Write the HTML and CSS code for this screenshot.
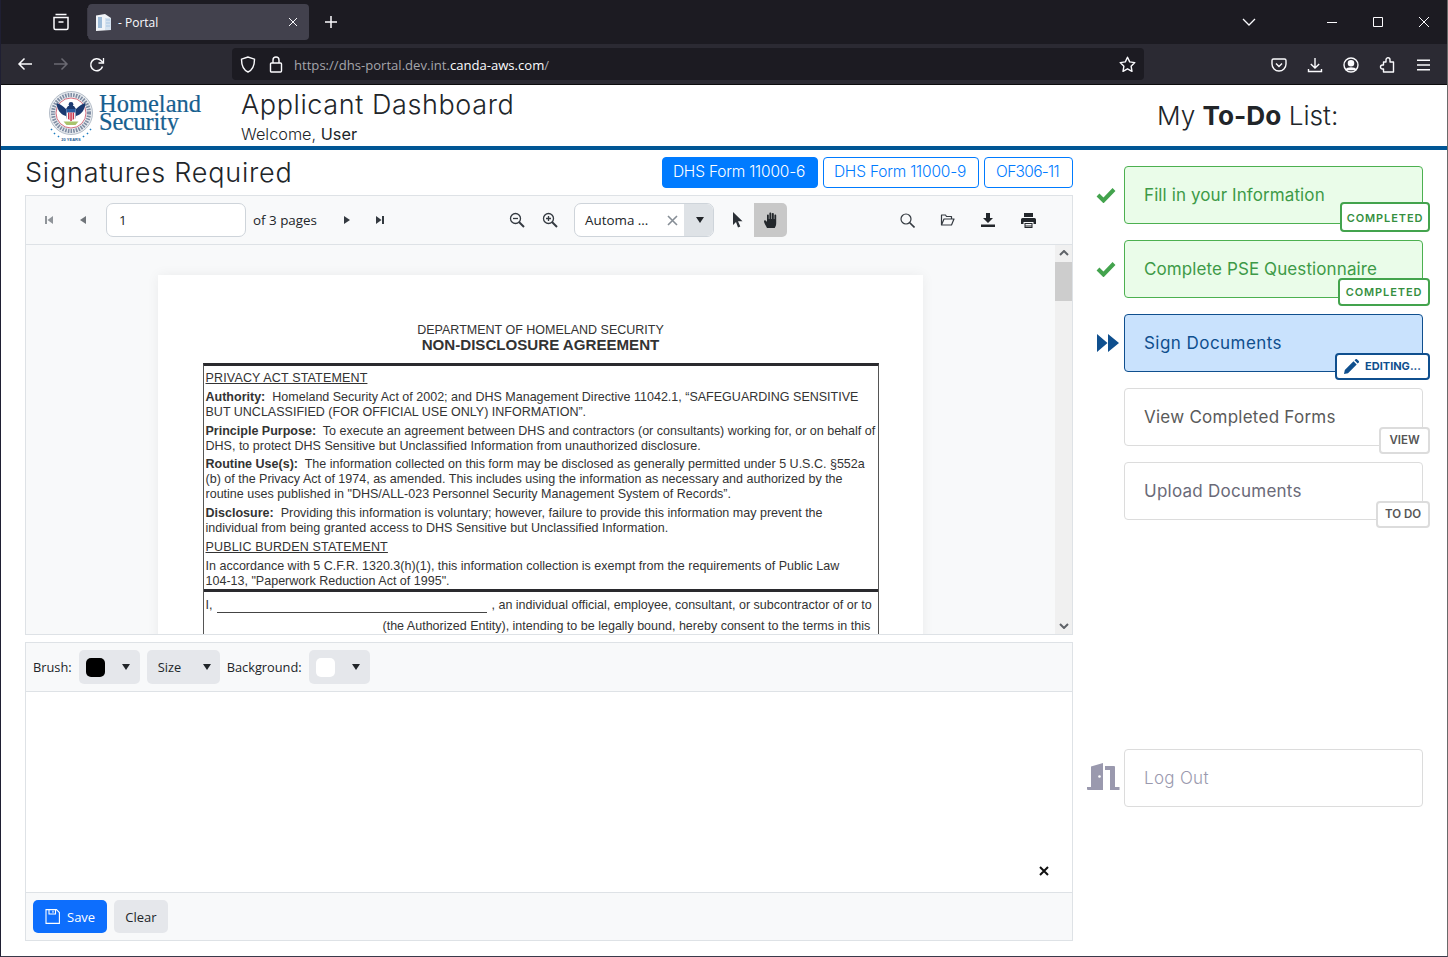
FILE: index.html
```html
<!DOCTYPE html>
<html lang="en">
<head>
  <meta charset="UTF-8">
  <title>Portal</title>
  <link rel="stylesheet" href="styles.css">
</head>
<body>
<div class="tabbar">
  <svg class="fx-view" width="18" height="18" viewBox="0 0 18 18" fill="none" stroke="#fbfbfe" stroke-width="1.5"><path d="M3.5 1.5h11M2 4.500h14v10.500a1.500 1.500 0 0 1-1.500 1.500h-11a1.500 1.500 0 0 1-1.500-1.500zM6.500 9h5"/></svg>
  <div class="tab">
    <svg width="16" height="17" viewBox="0 0 16 17"><path d="M0 1.500 9 0l6 4v12l-15 1z" fill="#f1f4f8"/><path d="M9 4h6v12H9z" fill="#d5e2ef"/><path d="M2 3h4v11H2z" fill="#9dbbd8"/><path d="M10 6h4M10 9h4M10 12h4" stroke="#a9c6e3"/></svg>
    <span class="tab-title">- Portal</span>
    <svg class="tab-x" width="10" height="10" viewBox="0 0 10 10" stroke="#fbfbfe" stroke-width="1"><path d="M1 1l8 8M9 1l-8 8"/></svg>
  </div>
  <svg class="tab-plus" width="14" height="14" viewBox="0 0 14 14" stroke="#fbfbfe" stroke-width="1.500"><path d="M7 1v12M1 7h12"/></svg>
  <svg class="tab-list" width="14" height="8" viewBox="0 0 14 8" fill="none" stroke="#fbfbfe" stroke-width="1.300"><path d="M1 1l6 6 6-6"/></svg>
  <div class="win-btns">
    <svg width="10" height="10" viewBox="0 0 10 10" stroke="#fbfbfe"><path d="M0 5.500h10"/></svg>
    <svg width="10" height="10" viewBox="0 0 10 10" fill="none" stroke="#fbfbfe"><path d="M.5.500h9v9h-9z"/></svg>
    <svg width="10" height="10" viewBox="0 0 10 10" stroke="#fbfbfe"><path d="M0 0l10 10M10 0 0 10"/></svg>
  </div>
</div>
<div class="navbar">
  <div class="nav-btns">
    <svg width="16" height="14" viewBox="0 0 16 14" fill="none" stroke="#fbfbfe" stroke-width="1.500"><path d="M15 7H2M7.500 1.500 2 7l5.500 5.500"/></svg>
    <svg width="16" height="14" viewBox="0 0 16 14" fill="none" stroke="#6b6a73" stroke-width="1.500"><path d="M1 7h13M8.500 1.500 14 7l-5.500 5.500"/></svg>
    <svg width="16" height="16" viewBox="0 0 16 16" fill="none" stroke="#fbfbfe" stroke-width="1.500"><path d="M13.500 9.500A6 6 0 1 1 12 3.500l2 2"/><path d="M14.500 1v5h-5" stroke-width="1.300"/></svg>
  </div>
  <div class="urlbar">
    <svg width="16" height="17" viewBox="0 0 16 17" fill="none" stroke="#fbfbfe" stroke-width="1.400"><path d="M8 1 1.500 3.200c0 6 1.500 10.500 6.500 12.800 5-2.300 6.500-6.800 6.500-12.800z"/></svg>
    <svg class="lock" width="14" height="17" viewBox="0 0 14 17" fill="none" stroke="#fbfbfe" stroke-width="1.400"><path d="M1.500 8a1 1 0 0 1 1-1h9a1 1 0 0 1 1 1v7a1 1 0 0 1-1 1h-9a1 1 0 0 1-1-1zM4 7V4a3 3 0 0 1 6 0v3"/></svg>
    <span class="url">https://dhs-portal.dev.int.<b>canda-aws.com</b>/</span>
    <svg class="star" width="17" height="17" viewBox="0 0 17 17" fill="none" stroke="#fbfbfe" stroke-width="1.400" stroke-linejoin="round"><path d="M8.500 1.200l2.200 4.700 5.100.7-3.700 3.600.9 5.100-4.500-2.500-4.500 2.500.9-5.100L1.200 6.600l5.100-.7z"/></svg>
  </div>
  <div class="nav-tools">
    <svg width="16" height="16" viewBox="0 0 16 16" fill="none" stroke="#fbfbfe" stroke-width="1.400"><path d="M2.500 2h11A1.500 1.500 0 0 1 15 3.500V7A7 7 0 0 1 1 7V3.500A1.500 1.500 0 0 1 2.500 2z"/><path d="M5 6.500l3 3 3-3"/></svg>
    <svg width="16" height="16" viewBox="0 0 16 16" fill="none" stroke="#fbfbfe" stroke-width="1.400"><path d="M8 1v10M3.800 7 8 11l4.200-4M1.500 12v2.500h13V12"/></svg>
    <svg width="16" height="16" viewBox="0 0 16 16" fill="none" stroke="#fbfbfe" stroke-width="1.400"><circle cx="8" cy="8" r="7"/><circle cx="8" cy="6.300" r="2.600" fill="#fbfbfe"/><path d="M3.500 12.500c1-2 8-2 9 0z" fill="#fbfbfe"/></svg>
    <svg width="16" height="16" viewBox="0 0 16 16" fill="none" stroke="#fbfbfe" stroke-width="1.400" stroke-linejoin="round"><path d="M7 5V2.800a2 2 0 0 1 4 0V5h3.500v10H4.500v-3h-1a2 2 0 0 1 0-4h1V5z"/></svg>
    <svg width="16" height="16" viewBox="0 0 16 16" stroke="#fbfbfe" stroke-width="1.500"><path d="M2 3.200h13M2 8h13M2 12.800h13"/></svg>
  </div>
</div>

<header class="app-header">
  <div class="logo">
    <svg width="46" height="50" viewBox="0 0 46 50">
      <circle cx="23" cy="22" r="21.500" fill="#e9ecf0" stroke="#b4bdc8"/>
      <circle cx="23" cy="22" r="18" fill="none" stroke="#7f8da3" stroke-width="4" stroke-dasharray="1.600 1.100"/>
      <circle cx="23" cy="22" r="15" fill="#fff" stroke="#c8344a" stroke-width=".7"/>
      <path d="M8.500 12c3 1 6 2.500 9.500 6l2-3h6l2 3c3.500-3.500 6.500-5 9.500-6-.5 6-3.500 11.500-9.500 13l-1 3h-8l-1-3c-6-1.500-9-7-9.500-13z" fill="#1c3a70"/>
      <circle cx="23" cy="13.500" r="2.400" fill="#1c3a70"/>
      <path d="M18.500 18h9v8c0 2.500-2.500 3.500-4.500 4.500-2-1-4.500-2-4.500-4.500z" fill="#fff"/>
      <path d="M18.500 18h9v3.500h-9z" fill="#2a5ba0"/>
      <path d="M20 21.500h1.500V29l-1.500-1zM22.300 21.500h1.500V30l-1.500.3zM24.600 21.500h1.500V28l-1.500 1z" fill="#c8334a"/>
      <path d="M15.500 30.500h15l-3 3.500h-9z" fill="#a9c46c"/>
      <path d="M6 42l1 1M10 45l1 1M35 45l1 1M39 42l1 1M3 38l1 1M42 38l1 1" stroke="#1c7cc0" stroke-width="1.600"/>
      <text x="23" y="49.500" text-anchor="middle" class="seal-text">20 YEARS</text>
    </svg>
    <div class="logo-words">Homeland<br><span>Security</span></div>
  </div>
  <div class="titles">
    <h1>Applicant Dashboard</h1>
    <p>Welcome, <span>User</span></p>
  </div>
  <div class="todo-title">My <b>To-Do</b> List:</div>
</header>

<main class="main">
  <section class="left">
    <div class="doc-head">
      <h2>Signatures Required</h2>
      <div class="doc-tabs">
        <button class="doc-tab active">DHS Form 11000-6</button>
        <button class="doc-tab">DHS Form 11000-9</button>
        <button class="doc-tab short">OF306-11</button>
      </div>
    </div>

    <div class="viewer">
      <div class="viewer-bar">
        <svg class="ico first" width="10" height="10" viewBox="0 0 10 10" fill="#8f9499"><path d="M1 1h2v8H1zM9 1v8L3.500 5z"/></svg>
        <svg class="ico prev" width="8" height="10" viewBox="0 0 8 10" fill="#70757a"><path d="M7 1v8L1 5z"/></svg>
        <input class="page-input" value="1">
        <span class="of-pages">of 3 pages</span>
        <svg class="ico next" width="8" height="10" viewBox="0 0 8 10" fill="#343a40"><path d="M1 1v8l6-4z"/></svg>
        <svg class="ico last" width="10" height="10" viewBox="0 0 10 10" fill="#343a40"><path d="M9 1H7v8h2zM1 1v8l5.500-4z"/></svg>
        <svg class="ico zoom-out" width="16" height="16" viewBox="0 0 16 16" fill="none" stroke="#343a40" stroke-width="1.300"><circle cx="6.500" cy="6.500" r="5"/><path d="M4 6.500h5"/><path d="M10 10l5 5" stroke-width="2"/></svg>
        <svg class="ico zoom-in" width="16" height="16" viewBox="0 0 16 16" fill="none" stroke="#343a40" stroke-width="1.300"><circle cx="6.500" cy="6.500" r="5"/><path d="M4 6.500h5M6.500 4v5"/><path d="M10 10l5 5" stroke-width="2"/></svg>
        <div class="zoom-combo">
          <span class="combo-text">Automa ...</span>
          <svg class="combo-x" width="11" height="11" viewBox="0 0 11 11" stroke="#868e96" stroke-width="1.600"><path d="M1 1l9 9M10 1l-9 9"/></svg>
          <span class="combo-btn"><i class="caret dark"></i></span>
        </div>
        <svg class="ico pointer" width="11" height="16" viewBox="0 0 11 16" fill="#2b3036"><path d="M1 0v13l3-3 2 5.500 2.300-.9L6 9.300h4.500z"/></svg>
        <span class="hand-btn">
          <svg width="16" height="17" viewBox="0 0 16 17" fill="#23272b"><path d="M3 16c-1-2-3-5-3-6.500s1.500-1.500 2.300-.5L3 10V3.500c0-1.300 1.800-1.300 1.800 0V7h.6V1.500c0-1.300 1.900-1.300 1.900 0V7h.6V2c0-1.300 1.900-1.300 1.900 0v5h.6V3.500c0-1.300 1.800-1.300 1.800 0V11c0 2-.5 3.500-1.500 5z"/></svg>
        </span>
        <svg class="ico search" width="15" height="15" viewBox="0 0 15 15" fill="none" stroke="#343a40" stroke-width="1.200"><circle cx="6" cy="6" r="5"/><path d="M9.500 9.500l5 5" stroke-width="1.600"/></svg>
        <svg class="ico folder" width="15" height="12" viewBox="0 0 15 12" fill="none" stroke="#343a40" stroke-width="1.200" stroke-linejoin="round"><path d="M1.500 11V1h4l1 1.500h5V5M1.500 11h10L14 5H4z"/></svg>
        <svg class="ico download" width="14" height="14" viewBox="0 0 14 14" fill="#23272b"><path d="M5 0h4v5h3L7 10 2 5h3zM0 11.500h14V14H0z"/></svg>
        <svg class="ico print" width="15" height="15" viewBox="0 0 15 15" fill="#23272b"><path d="M3 0h9v4H3zM1.500 5h12A1.500 1.500 0 0 1 15 6.500V11h-2.500V9h-10v2H0V6.500A1.500 1.500 0 0 1 1.500 5zM3.500 10h8v5h-8z"/><path d="M4.500 11.500h6M4.500 13h6" stroke="#f8f9fa"/></svg>
      </div>
      <div class="viewer-body">
        <div class="sheet">
          <div class="sheet-dept">DEPARTMENT OF HOMELAND SECURITY</div>
          <div class="sheet-title">NON-DISCLOSURE AGREEMENT</div>
          <div class="nda-box">
            <p class="ln"><u>PRIVACY ACT STATEMENT</u></p>
            <p class="ln"><b>Authority:</b>&nbsp; Homeland Security Act of 2002; and DHS Management Directive 11042.1, “SAFEGUARDING SENSITIVE<br>BUT UNCLASSIFIED (FOR OFFICIAL USE ONLY) INFORMATION”.</p>
            <p class="ln"><b>Principle Purpose:</b>&nbsp; To execute an agreement between DHS and contractors (or consultants) working for, or on behalf of<br>DHS, to protect DHS Sensitive but Unclassified Information from unauthorized disclosure.</p>
            <p class="ln"><b>Routine Use(s):</b>&nbsp; The information collected on this form may be disclosed as generally permitted under 5 U.S.C. §552a<br>(b) of the Privacy Act of 1974, as amended. This includes using the information as necessary and authorized by the<br>routine uses published in "DHS/ALL-023 Personnel Security Management System of Records”.</p>
            <p class="ln"><b>Disclosure:</b>&nbsp; Providing this information is voluntary; however, failure to provide this information may prevent the<br>individual from being granted access to DHS Sensitive but Unclassified Information.</p>
            <p class="ln"><u>PUBLIC BURDEN STATEMENT</u></p>
            <p class="ln">In accordance with 5 C.F.R. 1320.3(h)(1), this information collection is exempt from the requirements of Public Law<br>104-13, "Paperwork Reduction Act of 1995".</p>
            <div class="nda-rule"></div>
            <p class="ln sign-line"><span>I,</span><span class="blank"></span><span>, an individual official, employee, consultant, or subcontractor of or to</span></p>
            <p class="ln entity">(the Authorized Entity), intending to be legally bound, hereby consent to the terms in this</p>
          </div>
        </div>
        <div class="scroll">
          <svg class="scroll-up" width="10" height="6" viewBox="0 0 10 6" fill="none" stroke="#5f6368" stroke-width="2"><path d="M1 5l4-4 4 4"/></svg>
          <div class="scroll-thumb"></div>
          <svg class="scroll-down" width="10" height="6" viewBox="0 0 10 6" fill="none" stroke="#5f6368" stroke-width="2"><path d="M1 1l4 4 4-4"/></svg>
        </div>
      </div>
    </div>

    <div class="sigpad">
      <div class="sig-bar">
        <span>Brush:</span>
        <span class="sig-select swatch-select"><i class="swatch black"></i><i class="caret dark"></i></span>
        <span class="sig-select size-select">Size<i class="caret dark"></i></span>
        <span>Background:</span>
        <span class="sig-select swatch-select"><i class="swatch white"></i><i class="caret dark"></i></span>
      </div>
      <div class="sig-canvas">
        <svg class="sig-x" width="10" height="10" viewBox="0 0 10 10" stroke="#111" stroke-width="2"><path d="M1 1l8 8M9 1 1 9"/></svg>
      </div>
      <div class="sig-foot">
        <button class="btn btn-save">
          <svg width="15" height="15" viewBox="0 0 15 15" fill="none" stroke="#fff" stroke-width="1.100"><path d="M1 .6h10.500L14.400 3.500V14.400H1zM4 .6v4.400h6.500V.6M8 1.800v2"/></svg>
          Save
        </button>
        <button class="btn btn-clear">Clear</button>
      </div>
    </div>
  </section>

  <aside class="todo">
    <div class="todo-row">
      <svg class="st-ico" width="20" height="16" viewBox="0 0 20 16" fill="none" stroke="#43a34d" stroke-width="4"><path d="M2 8l5.500 5.500L18 2.500"/></svg>
      <div class="card done">Fill in your Information<span class="badge b-done">COMPLETED</span></div>
    </div>
    <div class="todo-row">
      <svg class="st-ico" width="20" height="16" viewBox="0 0 20 16" fill="none" stroke="#43a34d" stroke-width="4"><path d="M2 8l5.500 5.500L18 2.500"/></svg>
      <div class="card done">Complete PSE Questionnaire<span class="badge b-done wide">COMPLETED</span></div>
    </div>
    <div class="todo-row">
      <svg class="st-ico arrows" width="22" height="18" viewBox="0 0 22 18" fill="#0f4f8e"><path d="M0 0l10.500 9L0 18zM11 0l11 9-11 9z"/></svg>
      <div class="card current">Sign Documents
        <span class="badge b-edit">
          <svg width="15" height="15" viewBox="0 0 15 15" fill="#0f4f8e"><path d="M0 15l.8-4L9.500 2.300l3.200 3.200L4 14.200zM10.500 1.300 11.600.2a1 1 0 0 1 1.300 0l1.900 1.900a1 1 0 0 1 0 1.300l-1.100 1.100z"/></svg>
          EDITING...
        </span>
      </div>
    </div>
    <div class="todo-row">
      <div class="card plain">View Completed Forms<span class="badge b-plain view">VIEW</span></div>
    </div>
    <div class="todo-row">
      <div class="card plain upload">Upload Documents<span class="badge b-plain">TO DO</span></div>
    </div>
    <div class="todo-row logout-row">
      <svg class="st-ico door" width="33" height="27" viewBox="0 0 33 27" fill="#9a99ae"><path d="M0 24h4V3.500L16 0v27H1a1 1 0 0 1-1-1zM18 3h9a1 1 0 0 1 1 1v20h4.500v3H23V7h-5z"/><circle cx="12.500" cy="13.500" r="1.300" fill="#fff"/></svg>
      <div class="card logout">Log Out</div>
    </div>
  </aside>
</main>
</body>
</html>
```

FILE: styles.css
```css
* {
  box-sizing: border-box;
}
html, body {
  margin: 0;
  height: 957px;
  overflow: hidden;
}
body {
  font-family: "Open Sans", "Noto Sans", sans-serif;
  background: #fff;
  color: #212529;
  border-left: 1px solid #1f1f33;
  border-right: 1px solid #6a6a6a;
  border-bottom: 1px solid #3a3a4a;
}
svg {
  display: block;
  flex: none;
}
p, h1, h2 {
  margin: 0;
  font-weight: 400;
}

/* browser chrome */
.tabbar {
  height: 44px;
  margin-left: -1px;
  margin-right: -1px;
  background: #1c1b22;
  display: flex;
  align-items: center;
  position: relative;
}
.fx-view {
  margin-left: 52px;
}
.tab {
  margin-left: 18px;
  width: 221px;
  height: 36px;
  background: #42414d;
  border-radius: 4px;
  display: flex;
  align-items: center;
  padding: 0 11px 0 8px;
  box-shadow: -5px 0 0 -4px #3a3944;
}
.tab-title {
  color: #fbfbfe;
  font-size: 12px;
  margin-left: 6px;
  flex: 1;
}
.tab-plus {
  margin-left: 15px;
}
.tab-list {
  margin-left: auto;
  margin-right: -1px;
}
.win-btns {
  display: flex;
  gap: 36px;
  margin-left: 72px;
  margin-right: 19px;
}
.navbar {
  height: 41px;
  margin-left: -1px;
  margin-right: -1px;
  background: #2b2a33;
  border-bottom: 1px solid #0c0c0d;
  display: flex;
  align-items: center;
}
.nav-btns {
  display: flex;
  gap: 20px;
  margin-left: 17px;
  width: 215px;
  padding-top: 1px;
}
.urlbar {
  width: 912px;
  height: 32px;
  margin-top: -1px;
  background: #1c1b22;
  border-radius: 4px;
  display: flex;
  align-items: center;
  padding: 1px 8px 0;
}
.lock {
  margin-left: 13px;
}
.url {
  margin-left: 11px;
  font-size: 13.100px;
  color: #a5a5ab;
  flex: 1;
  padding-top: 1px;
}
.url b {
  font-weight: 400;
  color: #fbfbfe;
}
.nav-tools {
  display: flex;
  gap: 20px;
  margin-left: 127px;
  padding-top: 1px;
}

/* app header */
.app-header {
  height: 65px;
  border-bottom: 4px solid #005695;
  display: flex;
  align-items: flex-start;
}
.logo {
  display: flex;
  margin-left: 47px;
  width: 193px;
  padding-top: 6px;
}
.seal-text {
  font-family: "Liberation Sans", sans-serif;
  font-size: 4px;
  font-weight: 700;
  fill: #1c5c96;
}
.logo-words {
  margin-left: 5px;
  margin-top: 4px;
  font-family: "Liberation Serif", serif;
  font-size: 24.500px;
  line-height: 18px;
  color: #17608f;
  -webkit-text-stroke: .2px #17608f;
}
.logo-words span {
  letter-spacing: -.25px;
}
.titles {
  width: 860px;
  padding-top: 3px;
}
.titles h1 {
  font-family: Inter, sans-serif;
  font-size: 27px;
  line-height: 34px;
  font-weight: 300;
  letter-spacing: .6px;
  color: #212529;
}
.titles p {
  font-family: Inter, sans-serif;
  font-size: 16.300px;
  line-height: 20px;
  margin-top: 2px;
  font-weight: 300;
}
.titles p span {
  font-weight: 400;
}
.todo-title {
  font-family: Inter, sans-serif;
  font-weight: 300;
  font-size: 26.200px;
  line-height: 32px;
  margin-left: 56px;
  margin-top: 15px;
}
.todo-title b {
  font-weight: 700;
}

/* layout */
.main {
  height: 807px;
  display: flex;
  padding-left: 24px;
}
.left {
  width: 1048px;
  padding-top: 7px;
}
.doc-head {
  display: flex;
  justify-content: space-between;
  align-items: center;
  height: 31px;
  margin-bottom: 7px;
}
.doc-head h2 {
  font-family: Inter, sans-serif;
  font-weight: 300;
  font-size: 27px;
  letter-spacing: .78px;
  color: #212529;
  margin-top: -1px;
}
.doc-tabs {
  display: flex;
  gap: 5px;
}
.doc-tab {
  width: 156px;
  height: 31px;
  padding: 0 2px 2px 0;
  border: 1px solid #007bff;
  border-radius: 4px;
  background: #fff;
  color: #007bff;
  font-family: Inter, sans-serif;
  font-size: 15.500px;
  font-weight: 300;
  letter-spacing: -.2px;
}
.doc-tab.short {
  width: 89px;
  letter-spacing: -.7px;
}
.doc-tab.active {
  background: #007bff;
  color: #fff;
}

/* pdf viewer */
.viewer {
  height: 440px;
  border: 1px solid #dee2e6;
  background: #f8f9fa;
}
.viewer-bar {
  height: 49px;
  border-bottom: 1px solid #dee2e6;
  display: flex;
  align-items: center;
  padding-left: 18px;
}
.ico.prev {
  margin-left: 25px;
}
.page-input {
  margin-left: 19px;
  width: 140px;
  height: 34px;
  padding: 0 12px;
  border: 1px solid #ced4da;
  border-radius: 7px;
  background: #fff;
  font-family: inherit;
  font-size: 13.400px;
  color: #212529;
}
.of-pages {
  margin-left: 7px;
  font-size: 13.400px;
}
.ico.next {
  margin-left: 26px;
}
.ico.last {
  margin-left: 24px;
}
.ico.zoom-out {
  margin-left: 124px;
}
.ico.zoom-in {
  margin-left: 17px;
}
.zoom-combo {
  margin-left: 16px;
  width: 140px;
  height: 34px;
  border: 1px solid #ced4da;
  border-radius: 7px;
  background: #fff;
  display: flex;
  align-items: center;
  overflow: hidden;
  font-size: 13.400px;
}
.combo-text {
  margin-left: 10px;
  width: 82px;
}
.combo-btn {
  margin-left: auto;
  width: 29px;
  height: 100%;
  padding-left: 3px;
  background: #dee2e6;
  display: flex;
  align-items: center;
  justify-content: center;
}
.caret {
  display: inline-block;
  width: 0;
  height: 0;
  border-left: 4.500px solid transparent;
  border-right: 4.500px solid transparent;
  border-top: 6px solid #212529;
}
.ico.pointer {
  margin-left: 18px;
}
.hand-btn {
  margin-left: 11px;
  width: 33px;
  height: 34px;
  padding-left: 3px;
  background: #c8c8c8;
  border-radius: 0 5px 5px 0;
  display: flex;
  align-items: center;
  justify-content: center;
}
.ico.search {
  margin-left: 113px;
}
.ico.folder {
  margin-left: 25px;
}
.ico.download {
  margin-left: 26px;
}
.ico.print {
  margin-left: 26px;
}
.viewer-body {
  height: 389px;
  position: relative;
  overflow: hidden;
  padding: 30px 0 0 132px;
}
.sheet {
  width: 765px;
  height: 700px;
  background: #fff;
  box-shadow: 0 0 12px rgba(0, 0, 0, .06);
  font-family: "Liberation Sans", sans-serif;
  font-size: 12.530px;
  line-height: 15px;
  color: #333;
  padding-top: 48px;
}
.sheet-dept {
  text-align: center;
  font-size: 12.500px;
  line-height: 14px;
}
.sheet-title {
  text-align: center;
  font-size: 15.100px;
  font-weight: 700;
  line-height: 15px;
}
.nda-box {
  margin: 11px 0 0 45px;
  width: 676px;
  border-top: 3px solid #2a2a2e;
  border-left: 1px solid #555;
  border-right: 1px solid #555;
  padding: 5px 0 0 1.500px;
  white-space: nowrap;
}
.ln {
  margin-bottom: 3.750px;
}
.ln u {
  letter-spacing: .15px;
}
.nda-rule {
  height: 3px;
  background: #2a2a2e;
  margin: -3px 0 0 -1.500px;
}
.sign-line {
  margin-top: 5.500px;
  display: flex;
  align-items: flex-end;
}
.sign-line .blank {
  width: 270px;
  height: 13px;
  margin: 0 4px 0 5px;
  border-bottom: 1px solid #444;
}
.entity {
  margin-top: 6.250px;
  padding-left: 177px;
}
.scroll {
  position: absolute;
  top: 0;
  right: 0;
  bottom: 0;
  width: 17px;
  background: #f0f0f0;
}
.scroll-up {
  position: absolute;
  top: 5px;
  left: 4px;
}
.scroll-thumb {
  position: absolute;
  top: 17px;
  left: 0;
  width: 17px;
  height: 39px;
  background: #cdcdcd;
}
.scroll-down {
  position: absolute;
  bottom: 5px;
  left: 4px;
}

/* signature pad */
.sigpad {
  margin-top: 7px;
  height: 299px;
  border: 1px solid #dee2e6;
  display: flex;
  flex-direction: column;
  font-size: 12.800px;
}
.sig-bar {
  height: 49px;
  background: #f8f9fa;
  border-bottom: 1px solid #dee2e6;
  display: flex;
  align-items: center;
  gap: 7px;
  padding-left: 7px;
}
.sig-select {
  height: 34px;
  background: #e5e7eb;
  border-radius: 5px;
  display: flex;
  align-items: center;
  justify-content: space-between;
}
.swatch-select {
  width: 61px;
  padding: 0 10px 0 7px;
}
.size-select {
  width: 73px;
  padding: 0 9px 0 11px;
}
.swatch {
  width: 19px;
  height: 19px;
  border-radius: 5px;
}
.swatch.black {
  background: #000;
}
.swatch.white {
  background: #fff;
}
.sig-canvas {
  flex: 1;
  background: #fff;
  position: relative;
}
.sig-x {
  position: absolute;
  right: 23px;
  bottom: 16px;
}
.sig-foot {
  height: 48px;
  background: #f8f9fa;
  border-top: 1px solid #dee2e6;
  display: flex;
  align-items: center;
  gap: 7px;
  padding-left: 7px;
}
.btn {
  height: 33px;
  border: 0;
  border-radius: 5px;
  font-family: inherit;
  font-size: 13px;
  display: flex;
  align-items: center;
}
.btn-save {
  width: 74px;
  background: #0d6efd;
  color: #fff;
  padding-left: 12px;
  gap: 7px;
}
.btn-clear {
  width: 54px;
  background: #e5e7eb;
  color: #212529;
  justify-content: center;
}

/* to-do list */
.todo {
  width: 336px;
  margin-left: 14px;
  padding-top: 16px;
  display: flex;
  flex-direction: column;
  gap: 16px;
}
.todo-row {
  display: flex;
  align-items: center;
  justify-content: flex-end;
  position: relative;
}
.st-ico {
  position: absolute;
  left: 9px;
  top: 21px;
}
.st-ico.arrows {
  left: 10px;
  top: 20px;
}
.st-ico.door {
  left: 0;
  top: 14px;
}
.card {
  width: 299px;
  height: 58px;
  border: 1px solid #dcdcdc;
  border-radius: 4px;
  padding-left: 19px;
  display: flex;
  align-items: center;
  position: relative;
  font-family: Inter, sans-serif;
  font-weight: 300;
  font-size: 17px;
  letter-spacing: .3px;
}
.card.done {
  background: #eafce9;
  border-color: #4cb050;
  color: #3d9a47;
  font-weight: 400;
  letter-spacing: .1px;
}
.card.current {
  background: #c9e2fd;
  border-color: #0f4f8e;
  color: #0f4f8e;
  font-weight: 400;
  letter-spacing: .45px;
}
.card.plain {
  color: #5a5a5a;
  font-weight: 400;
  letter-spacing: .25px;
}
.card.upload {
  color: #6a6a78;
}
.card.logout {
  color: #9a99ae;
}
.logout-row {
  margin-top: 213px;
}
.badge {
  position: absolute;
  right: -8px;
  background: #fff;
  border-radius: 4px;
  font-size: 11px;
  display: flex;
  align-items: center;
  justify-content: center;
  letter-spacing: .5px;
  font-weight: 600;
}
.b-done {
  top: 35px;
  width: 90px;
  height: 30px;
  border: 2px solid #43a34d;
  color: #358f40;
  letter-spacing: .9px;
  padding-top: 1px;
}
.b-done.wide {
  top: 37px;
  width: 92px;
  height: 28px;
  padding-top: 0;
}
.b-edit {
  top: 38px;
  width: 95px;
  height: 27px;
  border: 2px solid #0f4f8e;
  color: #0f4f8e;
  gap: 6px;
  font-weight: 700;
  letter-spacing: 0;
  padding-bottom: 1px;
}
.b-plain {
  top: 38px;
  width: 54px;
  height: 27px;
  border: 2px solid #dcdcdc;
  color: #555;
  font-size: 11.500px;
  letter-spacing: 0;
  padding-bottom: 1px;
}
.b-plain.view {
  width: 51px;
}
```
